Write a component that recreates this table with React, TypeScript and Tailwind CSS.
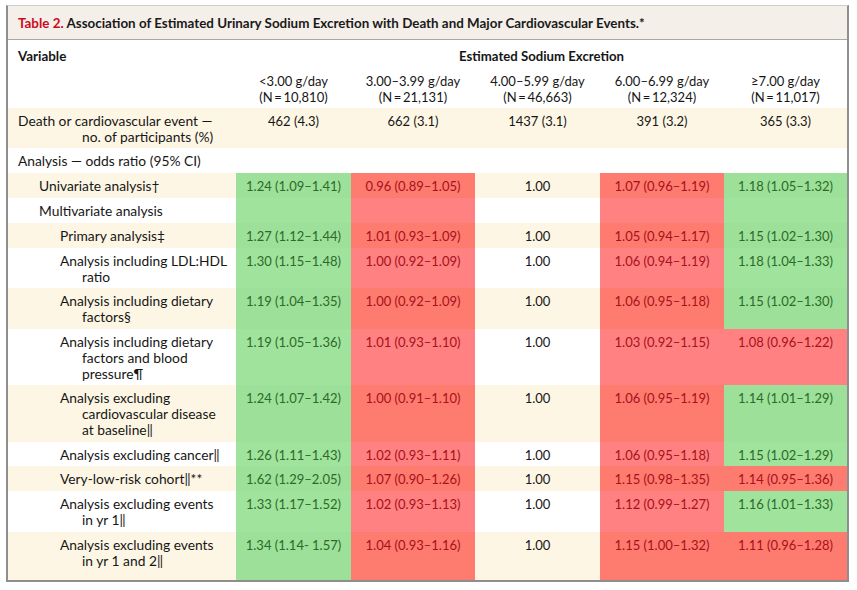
import React from "react";

type K = "g" | "r" | "n";
type Cell = { t: string; k: K };
type Row = {
  h: string;
  cream: boolean;
  level: 0 | 1 | 2;
  lines: string[];
  cells: Cell[];
};

const widths = ["w-[115px]", "w-[124px]", "w-[125px]", "w-[124px]", "w-[123px]"];

const c = (t: string, k: K): Cell => ({ t, k });

const rows: Row[] = [
  {
    h: "h-[40px]",
    cream: true,
    level: 0,
    lines: ["Death or cardiovascular event —", "no. of participants (%)"],
    cells: [c("462 (4.3)", "n"), c("662 (3.1)", "n"), c("1437 (3.1)", "n"), c("391 (3.2)", "n"), c("365 (3.3)", "n")],
  },
  {
    h: "h-[25px]",
    cream: false,
    level: 0,
    lines: ["Analysis — odds ratio (95% CI)"],
    cells: [c("", "n"), c("", "n"), c("", "n"), c("", "n"), c("", "n")],
  },
  {
    h: "h-[25px]",
    cream: true,
    level: 1,
    lines: ["Univariate analysis†"],
    cells: [c("1.24 (1.09–1.41)", "g"), c("0.96 (0.89–1.05)", "r"), c("1.00", "n"), c("1.07 (0.96–1.19)", "r"), c("1.18 (1.05–1.32)", "g")],
  },
  {
    h: "h-[25px]",
    cream: false,
    level: 1,
    lines: ["Multivariate analysis"],
    cells: [c("", "g"), c("", "r"), c("", "n"), c("", "r"), c("", "g")],
  },
  {
    h: "h-[25px]",
    cream: true,
    level: 2,
    lines: ["Primary analysis‡"],
    cells: [c("1.27 (1.12–1.44)", "g"), c("1.01 (0.93–1.09)", "r"), c("1.00", "n"), c("1.05 (0.94–1.17)", "r"), c("1.15 (1.02–1.30)", "g")],
  },
  {
    h: "h-[40px]",
    cream: false,
    level: 2,
    lines: ["Analysis including LDL:HDL", "ratio"],
    cells: [c("1.30 (1.15–1.48)", "g"), c("1.00 (0.92–1.09)", "r"), c("1.00", "n"), c("1.06 (0.94–1.19)", "r"), c("1.18 (1.04–1.33)", "g")],
  },
  {
    h: "h-[41px]",
    cream: true,
    level: 2,
    lines: ["Analysis including dietary", "factors§"],
    cells: [c("1.19 (1.04–1.35)", "g"), c("1.00 (0.92–1.09)", "r"), c("1.00", "n"), c("1.06 (0.95–1.18)", "r"), c("1.15 (1.02–1.30)", "g")],
  },
  {
    h: "h-[56px]",
    cream: false,
    level: 2,
    lines: ["Analysis including dietary", "factors and blood", "pressure¶"],
    cells: [c("1.19 (1.05–1.36)", "g"), c("1.01 (0.93–1.10)", "r"), c("1.00", "n"), c("1.03 (0.92–1.15)", "r"), c("1.08 (0.96–1.22)", "r")],
  },
  {
    h: "h-[57px]",
    cream: true,
    level: 2,
    lines: ["Analysis excluding", "cardiovascular disease", "at baseline‖"],
    cells: [c("1.24 (1.07–1.42)", "g"), c("1.00 (0.91–1.10)", "r"), c("1.00", "n"), c("1.06 (0.95–1.19)", "r"), c("1.14 (1.01–1.29)", "g")],
  },
  {
    h: "h-[24px]",
    cream: false,
    level: 2,
    lines: ["Analysis excluding cancer‖"],
    cells: [c("1.26 (1.11–1.43)", "g"), c("1.02 (0.93–1.11)", "r"), c("1.00", "n"), c("1.06 (0.95–1.18)", "r"), c("1.15 (1.02–1.29)", "g")],
  },
  {
    h: "h-[25px]",
    cream: true,
    level: 2,
    lines: ["Very-low-risk cohort‖**"],
    cells: [c("1.62 (1.29–2.05)", "g"), c("1.07 (0.90–1.26)", "r"), c("1.00", "n"), c("1.15 (0.98–1.35)", "r"), c("1.14 (0.95–1.36)", "r")],
  },
  {
    h: "h-[41px]",
    cream: false,
    level: 2,
    lines: ["Analysis excluding events", "in yr 1‖"],
    cells: [c("1.33 (1.17–1.52)", "g"), c("1.02 (0.93–1.13)", "r"), c("1.00", "n"), c("1.12 (0.99–1.27)", "r"), c("1.16 (1.01–1.33)", "g")],
  },
  {
    h: "h-[48px]",
    cream: true,
    level: 2,
    lines: ["Analysis excluding events", "in yr 1 and 2‖"],
    cells: [c("1.34 (1.14- 1.57)", "g"), c("1.04 (0.93–1.16)", "r"), c("1.00", "n"), c("1.15 (1.00–1.32)", "r"), c("1.11 (0.96–1.28)", "r")],
  },
];

function cellClass(k: K, cream: boolean): string {
  if (k === "g") return cream ? "bg-[#9de099] text-[#2c6a29]" : "bg-[#a0e39d] text-[#2c6a29]";
  if (k === "r") return cream ? "bg-[#fe7b6f] text-[#a8101a]" : "bg-[#ff8181] text-[#a8101a]";
  return "text-[#161616]";
}

function levelClass(level: number): string {
  if (level === 0) return "pl-[10px]";
  if (level === 1) return "pl-[31px]";
  return "pl-[52px]";
}

function TableRow({ row }: { row: Row }) {
  return (
    <div className={`flex ${row.h} ${row.cream ? "bg-[#fdf6e4]" : "bg-white"}`}>
      <div className="w-[228px] pt-[5px] leading-4 text-[13.8px] text-[#161616] whitespace-nowrap">
        {row.lines.map((l, i) => (
          <div key={i} className={i === 0 ? levelClass(row.level) : "pl-[74px]"}>
            {l}
          </div>
        ))}
      </div>
      {row.cells.map((cell, i) => (
        <div key={i} className={`${widths[i]} pt-[5px] leading-4 text-center ${cellClass(cell.k, row.cream)}`}>
          {cell.t}
        </div>
      ))}
    </div>
  );
}

const heads = [
  ["<3.00 g/day", "(N\u2009=\u200910,810)"],
  ["3.00–3.99 g/day", "(N\u2009=\u200921,131)"],
  ["4.00–5.99 g/day", "(N\u2009=\u200946,663)"],
  ["6.00–6.99 g/day", "(N\u2009=\u200912,324)"],
  ["≥7.00 g/day", "(N\u2009=\u200911,017)"],
];

export default function App() {
  return (
    <div className="w-[857px] h-[590px] bg-white pt-[5px] pl-[6px] font-['Lato',sans-serif] text-[13px]">
      <div className="w-[843px] border-t border-t-[#cfcfcf] border-x-2 border-b-2 border-x-[#8e8e8e] border-b-[#8e8e8e]">
        <div className="h-[34px] bg-[#f5efe9] border-b border-b-[#a8a8a8] pl-[10px] pt-[9px] leading-4 font-bold text-[13.4px] text-[#1a1a1a] whitespace-nowrap">
          <span className="text-[#cc0a21]">Table 2.</span> Association of Estimated Urinary Sodium Excretion with Death and Major Cardiovascular Events.*
        </div>
        <div className="h-[68px] bg-white pt-[8px] leading-4 text-[#161616]">
          <div className="flex">
            <div className="w-[228px] pl-[10px] font-bold text-[13.4px]">Variable</div>
            <div className="w-[611px] text-center font-bold text-[13.2px]">Estimated Sodium Excretion</div>
          </div>
          <div className="flex mt-[9px]">
            <div className="w-[228px]" />
            {heads.map((h, i) => (
              <div key={i} className={`${widths[i]} text-center`}>
                <div>{h[0]}</div>
                <div>{h[1]}</div>
              </div>
            ))}
          </div>
        </div>
        {rows.map((r, i) => (
          <TableRow key={i} row={r} />
        ))}
      </div>
    </div>
  );
}
